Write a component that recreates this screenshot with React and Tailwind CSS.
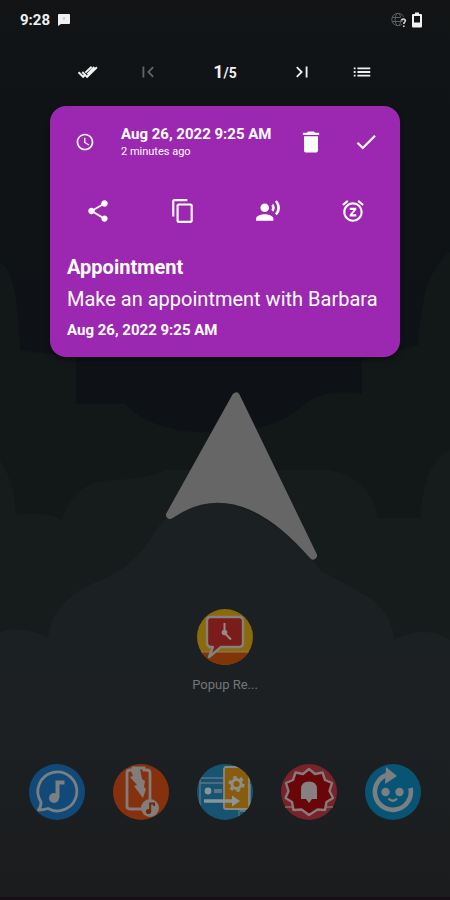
import React from 'react';
import {
  MdCheck,
  MdContentCopy,
  MdDelete,
  MdFirstPage,
  MdLastPage,
  MdList,
  MdRecordVoiceOver,
  MdSchedule,
  MdShare,
  MdSnooze
} from 'react-icons/md';

const reminder = {
  title: "Appointment",
  text: "Make an appointment with Barbara",
  date: "Aug 26, 2022 9:25 AM",
  ago: "2 minutes ago"
};

function Wallpaper() {
  return (
    <svg className="absolute inset-0 w-full h-full" viewBox="0 0 450 900" preserveAspectRatio="none" aria-hidden="true">
      <defs>
        <linearGradient id="sky" x1="0" y1="0" x2="0" y2="1">
          <stop offset="0" stopColor="#121416" />
          <stop offset="0.12" stopColor="#0f1315" />
          <stop offset="0.4" stopColor="#0e1216" />
          <stop offset="1" stopColor="#0e1216" />
        </linearGradient>
        <linearGradient id="ground" x1="0" y1="0" x2="0" y2="1">
          <stop offset="0" stopColor="#1b2022" />
          <stop offset="0.6" stopColor="#1c2022" />
          <stop offset="1" stopColor="#1b1c1e" />
        </linearGradient>
      </defs>
      <rect width="450" height="900" fill="url(#sky)" />
      <path d="M0 262Q18 272 20 350L76 358V404H125Q150 430 200 432Q270 436 305 404Q325 388 362 394V360L418 345Q422 270 450 252V900H0Z" fill="#121718" />
      <path d="M0 460Q14 480 16 515Q40 510 62 520Q72 482 112 480Q150 478 165 470H330Q372 480 378 518H420Q424 460 450 450V900H0Z" fill="#161b1c" />
      <path d="M0 632Q22 625 48 638Q52 602 92 584Q128 572 150 540Q172 500 216 502Q270 508 322 572Q350 586 370 598Q392 615 394 640Q424 624 450 640V900H0Z" fill="url(#ground)" />
      <rect y="897" width="450" height="3" fill="#160f16" />
    </svg>
  );
}

function StatusBar() {
  return (
    <header className="flex items-center justify-between h-10 pl-5 pr-7">
      <div className="flex items-center gap-2 text-[#f0f0f0]">
        <span className="text-[15px] font-bold">9:28</span>
        <svg className="w-3 h-3" viewBox="0 0 12 12" aria-hidden="true">
          <path fill="currentColor" d="M1 0H11Q12 0 12 1V9Q12 10 11 10H3L0 12V1Q0 0 1 0Z" />
          <path stroke="#b0b0b0" strokeWidth="1" d="M6 3v3" />
        </svg>
      </div>
      <div className="flex items-center gap-1">
        <svg className="w-[17px] h-4" viewBox="0 0 17 16" fill="none" aria-hidden="true">
          <g stroke="#5c5e60" strokeWidth="1">
            <circle cx="7" cy="7.5" r="6.2" />
            <ellipse cx="7" cy="7.5" rx="2.8" ry="6.2" />
            <path d="M1 5.5h12M1 9.5h12" />
          </g>
          <path d="M10 8.3Q10.5 6.5 12.6 6.7Q15.2 7.2 14.4 9.3Q12.8 10.7 12.8 12M12.8 13.5v1.5" stroke="#101315" strokeWidth="4" />
          <path d="M10.3 8.6Q10.8 7 12.6 7.2Q14.9 7.6 14.1 9.5Q12.8 10.7 12.8 12M12.8 13.4v1.6" stroke="#d0d0d0" strokeWidth="1.7" />
        </svg>
        <svg className="w-[10px] h-4" viewBox="0 0 10 16" aria-hidden="true">
          <path fill="#f2f2f2" fillRule="evenodd" d="M3 0.5h4v1.5h2q1 0 1 1v11.5q0 1 -1 1H1q-1 0 -1 -1V3q0-1 1-1h2ZM2 4v6.5h6V4Z" />
        </svg>
      </div>
    </header>
  );
}

function Toolbar() {
  return (
    <nav className="flex items-center justify-between h-16 px-[76px] text-[#f0f0f0]">
      <div className="flex items-center gap-9">
        <button type="button" aria-label="Mark all as done" className="flex items-center justify-center w-6 h-6">
          <svg className="w-6 h-6" viewBox="0 0 24 24" fill="none" stroke="currentColor" strokeWidth="1.9" aria-hidden="true">
            <path d="M2.5 12.3L7.2 16.8L9 15M6.3 12L11.1 16.8L20.9 7.3M9.3 12.6L15.6 6.8M11.3 14.3L18.3 7" />
          </svg>
        </button>
        <button type="button" aria-label="First" disabled className="flex items-center justify-center w-6 h-6 text-[#626466]">
          <MdFirstPage className="w-[22px] h-[22px]" />
        </button>
      </div>
      <p className="flex items-baseline font-bold">
        <span className="text-lg leading-6">1</span>
        <span className="text-sm leading-6">/5</span>
      </p>
      <div className="flex items-center gap-9">
        <button type="button" aria-label="Last" className="flex items-center justify-center w-6 h-6">
          <MdLastPage className="w-[22px] h-[22px]" />
        </button>
        <button type="button" aria-label="List" className="flex items-center justify-center w-6 h-6">
          <MdList className="w-[22px] h-[22px]" />
        </button>
      </div>
    </nav>
  );
}

function ReminderCard() {
  return (
    <section className="mx-[50px] mt-0.5 pb-[14px] rounded-2xl bg-[#9c27b0] text-white shadow-md shadow-black/30">
      <div className="flex items-center h-[71px] pl-[25px] pr-[21px]">
        <MdSchedule className="w-5 h-5 shrink-0" />
        <div className="flex-1 ml-[26px]">
          <h2 className="text-[15px] leading-5 font-bold whitespace-nowrap">{reminder.date}</h2>
          <p className="text-[11px] leading-4">{reminder.ago}</p>
        </div>
        <button type="button" aria-label="Delete">
          <MdDelete className="w-7 h-7" />
        </button>
        <button type="button" aria-label="Done" className="ml-7">
          <MdCheck className="w-[26px] h-[26px]" />
        </button>
      </div>

      <div className="grid grid-cols-4 items-center justify-items-center h-[68px] px-[5px]">
        <button type="button" aria-label="Share"><MdShare className="w-[26px] h-[26px]" /></button>
        <button type="button" aria-label="Copy"><MdContentCopy className="w-[26px] h-[26px]" /></button>
        <button type="button" aria-label="Read aloud"><MdRecordVoiceOver className="w-[26px] h-[26px]" /></button>
        <button type="button" aria-label="Snooze"><MdSnooze className="w-[26px] h-[26px]" /></button>
      </div>

      <div className="px-[17px] pt-2">
        <h1 className="text-xl leading-7 font-bold">{reminder.title}</h1>
        <p className="text-xl leading-9">{reminder.text}</p>
        <p className="text-[15px] leading-[26px] font-bold">{reminder.date}</p>
      </div>
    </section>
  );
}

function Arrow() {
  return (
    <svg className="mx-auto mt-[34px] w-[184px] h-[170px] shrink-0" viewBox="133 391 184 170" aria-hidden="true">
      <path
        d="M236 396.500L170 515Q237 468 313 555.500Z"
        fill="#666666"
        stroke="#666666"
        strokeWidth="8"
        strokeLinejoin="round"
      />
    </svg>
  );
}

function PopupIcon() {
  return (
    <svg className="w-14 h-14" viewBox="0 0 56 56" aria-hidden="true">
      <clipPath id="popup"><circle cx="28" cy="28" r="28" /></clipPath>
      <g clipPath="url(#popup)">
        <rect width="56" height="56" fill="#8a6a0a" />
        <path d="M0 43H56V56H0Z" fill="#803407" />
        <path d="M4 43H52" stroke="#93796e" strokeWidth="1" />
        <path d="M13 8H42Q46 8 46 12V34Q46 38 42 38H24L12 48L16 38H13Q10 37 10 34V12Q10 8 13 8Z" fill="#7a1c1a" stroke="#87807d" strokeWidth="2.400" strokeLinejoin="round" />
        <path d="M27.500 14V24L34 30.500" fill="none" stroke="#948a88" strokeWidth="2" />
        <circle cx="27.500" cy="23.500" r="2.800" fill="#948a88" />
      </g>
    </svg>
  );
}

function MusicChatIcon() {
  return (
    <svg className="w-14 h-14" viewBox="0 0 56 56" fill="none" aria-hidden="true">
      <circle cx="28" cy="28" r="28" fill="#114a78" />
      <path d="M12 38A19.500 19.500 0 1 1 19 44.500Q14 46 9.500 46Q12 43 12 38Z" stroke="#7b7f82" strokeWidth="2.800" strokeLinejoin="round" />
      <circle cx="25" cy="34" r="5" fill="#7b7f82" />
      <path d="M28.500 34V18.500H35.500" stroke="#7b7f82" strokeWidth="4" />
    </svg>
  );
}

function BatterySoundIcon() {
  return (
    <svg className="w-14 h-14" viewBox="0 0 56 56" fill="none" aria-hidden="true">
      <circle cx="28" cy="28" r="28" fill="#85310e" />
      <path d="M20 6V4H31V6H34Q37 6 37 9V42Q37 45 34 45H17Q14 45 14 42V9Q14 6 17 6Z" stroke="#827d7a" strokeWidth="2.800" />
      <path d="M17 5H27L29 15L32 17L31 23L33 25L30 34L21 22L24 21L17 13L20 12Z" fill="#827d7a" />
      <circle cx="37" cy="44" r="9" fill="#827d7a" />
      <circle cx="35.500" cy="47.500" r="2.600" fill="#6c290d" />
      <path d="M37.200 48V39.500H41V42" stroke="#6c290d" strokeWidth="2" />
    </svg>
  );
}

function SettingsShareIcon() {
  return (
    <svg className="w-14 h-14" viewBox="0 0 56 56" fill="none" aria-hidden="true">
      <clipPath id="share"><circle cx="28" cy="28" r="28" /></clipPath>
      <g clipPath="url(#share)">
        <rect width="56" height="56" fill="#165472" />
        <path d="M53 20V47H43" stroke="#6e858f" strokeWidth="1.400" />
        <path d="M3 14H26M3 19H26M3 14V42" stroke="#5c7581" strokeWidth="1.400" />
        <rect x="27" y="3" width="25" height="42" rx="2" fill="#875d0d" stroke="#8b8882" strokeWidth="1.800" />
        <circle cx="11" cy="27" r="3.400" fill="#8b9498" />
        <path d="M17 27H25" stroke="#5c7581" strokeWidth="4" />
        <path d="M7 37H36" stroke="#8b9498" strokeWidth="3.600" />
        <path d="M35 31.500L43 37L35 42.500Z" fill="#8b9498" />
        <circle cx="39.500" cy="20" r="4.600" stroke="#908d87" strokeWidth="3" />
        <circle cx="39.500" cy="20" r="6.800" stroke="#908d87" strokeWidth="2.600" strokeDasharray="3.560 3.560" />
        <path d="M42 46V53" stroke="#5c7581" strokeWidth="1.200" />
      </g>
    </svg>
  );
}

function AlarmBadgeIcon() {
  return (
    <svg className="w-14 h-14" viewBox="0 0 56 56" aria-hidden="true">
      <circle cx="28" cy="28" r="28" fill="#782329" />
      <path d="M4 43H52" stroke="#836b6d" strokeWidth="1.400" />
      <path
        d="M28 5L34 10L41.500 8.500L44 16L51 19L48.500 27L52 34L45.500 38L44 46L36.500 45.500L28 51L20.500 45.500L12.500 46L11 38L4.500 34L7.500 27L5 19L12 16L14.500 8.500L22 10Z"
        fill="#680609"
        stroke="#877a7c"
        strokeWidth="2.400"
        strokeLinejoin="round"
      />
      <path d="M20 35V25Q20 17.500 28 17.500Q36 17.500 36 25V35Z" fill="#878081" />
      <path d="M25 35H31L28 39Z" fill="#878081" />
    </svg>
  );
}

function SmileIcon() {
  return (
    <svg className="w-14 h-14" viewBox="0 0 56 56" fill="none" aria-hidden="true">
      <circle cx="28" cy="28" r="28" fill="#085475" />
      <path d="M23 10.500A18 18 0 1 0 45.500 24" stroke="#7b7f82" strokeWidth="4.600" />
      <path d="M21 3L32 12L20 20Z" fill="#7b7f82" />
      <circle cx="20.500" cy="28" r="4.200" fill="#7b7f82" />
      <circle cx="34.500" cy="28" r="4.200" fill="#7b7f82" />
      <path d="M23.500 34.500Q28 39 32 34.500" stroke="#7b7f82" strokeWidth="2.400" />
    </svg>
  );
}

const dock = [
  { name: "Music messages", icon: <MusicChatIcon /> },
  { name: "Battery sound", icon: <BatterySoundIcon /> },
  { name: "Settings share", icon: <SettingsShareIcon /> },
  { name: "Alarm", icon: <AlarmBadgeIcon /> },
  { name: "Smile", icon: <SmileIcon /> }
];

export default function App() {
  return (
    <div className="relative min-h-screen bg-[#0f1315] font-['Roboto',sans-serif]">
      <Wallpaper />
      <div className="relative flex flex-col min-h-screen">
        <StatusBar />
        <Toolbar />
        <ReminderCard />
        <Arrow />
        <button type="button" className="flex flex-col items-center self-center gap-2 mt-12 mb-8">
          <PopupIcon />
          <span className="text-[13px] leading-6 text-[#747779]">Popup Re...</span>
        </button>
        <footer className="flex justify-between mt-auto px-[29px] pb-20">
          {dock.map(app => (
            <button key={app.name} type="button" aria-label={app.name}>{app.icon}</button>
          ))}
        </footer>
      </div>
    </div>
  );
}
